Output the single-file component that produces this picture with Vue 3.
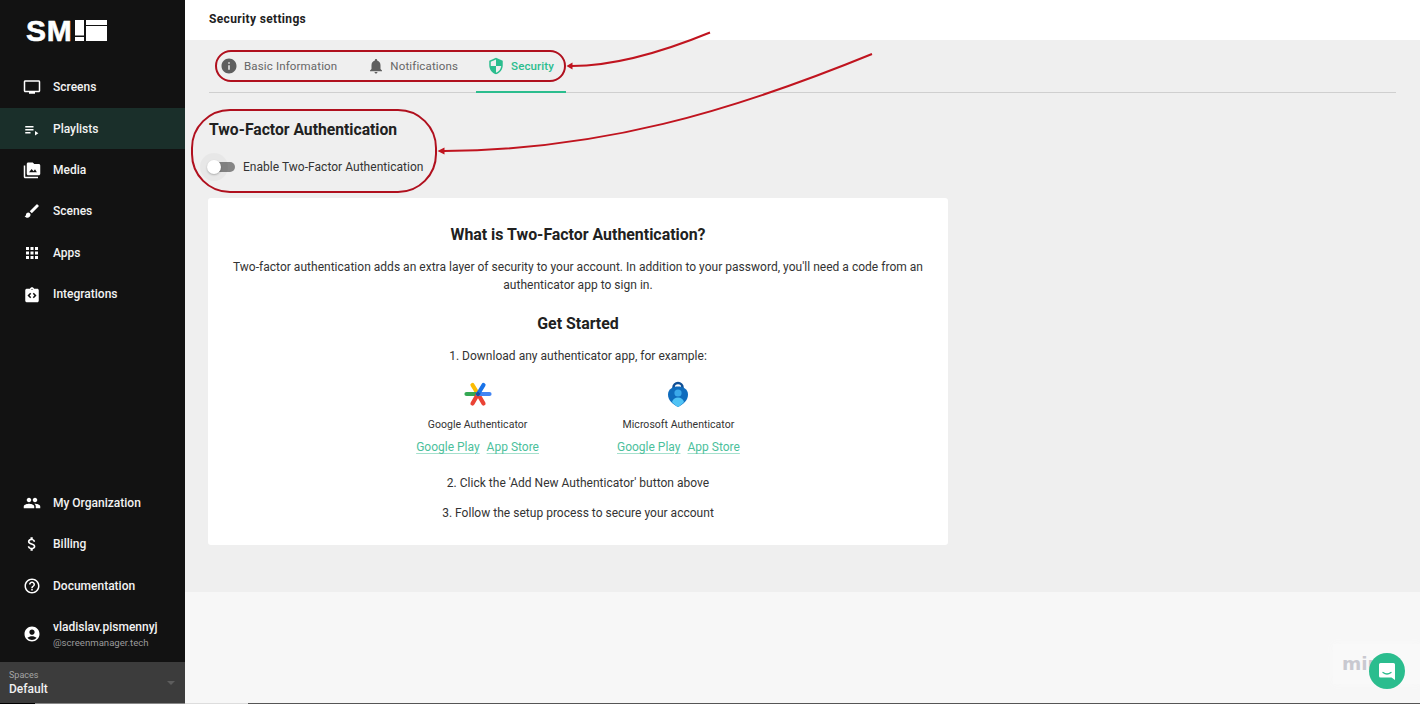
<template>
  <div class="page">
    <aside class="sidebar">
      <div class="logo">
        <span class="logo-text">SM</span>
        <svg class="logo-mark" width="32" height="21" viewBox="0 0 32 21">
          <rect x="0" y="0" width="9" height="15.5" fill="#fff" />
          <rect x="0" y="17" width="9" height="4" fill="#fff" />
          <rect x="11" y="0" width="21" height="5" fill="#fff" />
          <rect x="11" y="6" width="21" height="15" fill="#fff" />
        </svg>
      </div>
      <nav class="nav">
        <div v-for="item in topItems" :key="item.label" class="nav-item" :class="{ active: item.active }">
          <svg class="nav-icon" viewBox="0 0 24 24" fill="#fff"><path :d="item.icon" /></svg>
          <span>{{ item.label }}</span>
        </div>
      </nav>
      <div class="nav bottom">
        <div v-for="item in bottomItems" :key="item.label" class="nav-item">
          <svg class="nav-icon" viewBox="0 0 24 24" fill="#fff"><path :d="item.icon" /></svg>
          <span>{{ item.label }}</span>
        </div>
        <div class="user">
          <svg class="nav-icon" viewBox="0 0 24 24" fill="#fff">
            <path d="M12 2C6.48 2 2 6.48 2 12s4.48 10 10 10 10-4.48 10-10S17.52 2 12 2zm0 4c1.93 0 3.5 1.57 3.5 3.5S13.93 13 12 13s-3.5-1.57-3.5-3.5S10.07 6 12 6zm0 14c-2.03 0-4.43-.82-6.14-2.88C7.55 15.8 9.68 15 12 15s4.45.8 6.14 2.12C16.43 19.18 14.03 20 12 20z" />
          </svg>
          <div class="user-text">
            <div class="user-name">vladislav.pismennyj</div>
            <div class="user-domain">@screenmanager.tech</div>
          </div>
        </div>
      </div>
      <div class="spaces">
        <div>
          <div class="spaces-label">Spaces</div>
          <div class="spaces-value">Default</div>
        </div>
        <span class="spaces-caret"></span>
      </div>
    </aside>

    <main class="main">
      <header class="topbar">Security settings</header>
      <section class="content">
        <div class="tabs">
          <div class="tab tab-info">
            <svg class="tab-icon" viewBox="0 0 24 24" fill="#5f5f5f"><path d="M12 2C6.48 2 2 6.48 2 12s4.48 10 10 10 10-4.48 10-10S17.52 2 12 2zm1 15h-2v-6h2v6zm0-8h-2V7h2v2z" /></svg>
            <span>Basic Information</span>
          </div>
          <div class="tab tab-notif">
            <svg class="tab-icon" viewBox="0 0 24 24" fill="#5f5f5f"><path d="M12 22c1.1 0 2-.9 2-2h-4c0 1.1.89 2 2 2zm6-6v-5c0-3.07-1.64-5.64-4.5-6.32V4c0-.83-.67-1.5-1.5-1.5s-1.5.67-1.5 1.5v.68C7.63 5.36 6 7.92 6 11v5l-2 2v1h16v-1l-2-2z" /></svg>
            <span>Notifications</span>
          </div>
          <div class="tab tab-active">
            <svg class="tab-icon" viewBox="0 0 24 24" fill="#2bbd8e"><path d="M12 1L3 5v6c0 5.55 3.84 10.74 9 12 5.16-1.26 9-6.45 9-12V5l-9-4zm0 10.99h7c-.53 4.12-3.28 7.79-7 8.94V12H5V6.3l7-3.11v8.8z" /></svg>
            <span>Security</span>
          </div>
        </div>

        <h2 class="section-title">Two-Factor Authentication</h2>
        <div class="switch-row">
          <span class="switch"><span class="switch-halo"></span><span class="switch-knob"></span></span>
          <span class="switch-label">Enable Two-Factor Authentication</span>
        </div>

        <div class="card">
          <h3 class="card-title">What is Two-Factor Authentication?</h3>
          <p class="card-intro">Two-factor authentication adds an extra layer of security to your account. In addition to your password, you'll need a code from an authenticator app to sign in.</p>
          <h3 class="card-subtitle">Get Started</h3>
          <p class="step first">1. Download any authenticator app, for example:</p>
          <div class="apps">
            <div class="app">
              <svg class="app-icon" width="28" height="28" viewBox="0 0 28 28" fill="none" stroke-width="4.2" stroke-linecap="round">
                <path d="M14 14L8.5 5" stroke="#fbbc04" />
                <path d="M14 14H2.5" stroke="#34a853" />
                <path d="M14 14L8.5 23.5" stroke="#ea4335" />
                <path d="M14 14L19.5 23.5" stroke="#ea4335" />
                <path d="M14 14H25.5" stroke="#4285f4" />
                <path d="M14 14L19.5 5" stroke="#1a73e8" />
                <path d="M14 11.5L16.5 14L14 16.5L11.5 14z" fill="#1a4fa0" stroke="none" />
              </svg>
              <div class="app-name">Google Authenticator</div>
              <div class="app-links"><a>Google Play</a><a>App Store</a></div>
            </div>
            <div class="app">
              <svg class="app-icon" width="28" height="28" viewBox="0 0 28 28">
                <path d="M9.5 9V7.5a4.5 4.5 0 0 1 9 0V9" fill="none" stroke="#0f4f96" stroke-width="2.6" />
                <path d="M14 6.5c5 0 10 2.5 10 8 0 6-5 10-10 12.5C9 24.5 4 20.5 4 14.5c0-5.5 5-8 10-8z" fill="#0f6cbd" />
                <circle cx="14" cy="13" r="3.6" fill="#3aa8ea" />
                <path d="M8 22c.8-3 3-4.5 6-4.5s5.200 1.500 6 4.500c-1.800 2.200-3.800 3.800-6 5-2.200-1.200-4.200-2.800-6-5z" fill="#50c3f5" />
              </svg>
              <div class="app-name">Microsoft Authenticator</div>
              <div class="app-links"><a>Google Play</a><a>App Store</a></div>
            </div>
          </div>
          <p class="step second">2. Click the 'Add New Authenticator' button above</p>
          <p class="step third">3. Follow the setup process to secure your account</p>
        </div>
      </section>
      <div class="footer-area">
        <span class="miro">miro</span>
        <div class="chat">
          <svg width="18" height="19" viewBox="0 0 18 19">
            <path d="M2.5 1h13A1.5 1.5 0 0 1 17 2.5V18l-3.500-2.500h-11A1.500 1.500 0 0 1 1 14V2.500A1.500 1.500 0 0 1 2.500 1z" fill="#fff" />
            <path d="M5 10.500c2.300 1.700 5.700 1.700 8 0" fill="none" stroke="#2bbd8e" stroke-width="1.3" stroke-linecap="round" />
          </svg>
        </div>
      </div>
    </main>

    <svg class="notes" width="1420" height="704" viewBox="0 0 1420 704" fill="none">
      <rect x="216" y="51" width="349" height="30" rx="15" stroke="#b0101e" stroke-width="2" />
      <rect x="192" y="110" width="244" height="82" rx="38" stroke="#b0101e" stroke-width="2" />
      <path d="M710 32.500C660 53 615 66 572 66" stroke="#c0141f" stroke-width="2" />
      <path d="M872 54C730 112 600 150 444 151" stroke="#c0141f" stroke-width="2" />
      <path d="M566.500 66l6-3.500v7z" fill="#c0141f" />
      <path d="M437.500 151l7-3.500v7z" fill="#c0141f" />
    </svg>
    <div class="edge"></div>
  </div>
</template>

<script setup>
const topItems = [
  { label: 'Screens', icon: 'M21 3H3c-1.100 0-2 .9-2 2v12c0 1.100.9 2 2 2h5v2h8v-2h5c1.100 0 2-.9 2-2V5c0-1.100-.9-2-2-2zm0 14H3V5h18v12z' },
  { label: 'Playlists', active: true, icon: 'M3 8h11v2H3zM3 12h11v2H3zM3 16h7v2H3zM16 14.500v6l4.500-3z' },
  { label: 'Media', icon: 'M3 6H1v15c0 1.100.9 2 2 2h17v-2H3V6zm18-2h-6l-2-2H7c-1.100 0-2 .9-2 2v13c0 1.100.9 2 2 2h14c1.100 0 2-.9 2-2V6c0-1.100-.9-2-2-2zM8 15l3.500-4.500 2.500 3 2-2.500 2.500 4H8z' },
  { label: 'Scenes', icon: 'M7 14c-1.660 0-3 1.340-3 3 0 1.310-1.160 2-2 2 .92 1.220 2.490 2 4 2 2.210 0 4-1.790 4-4 0-1.660-1.340-3-3-3zm13.710-9.370l-1.340-1.340a.996.996 0 0 0-1.410 0L9 12.250 11.750 15l8.960-8.960a.996.996 0 0 0 0-1.410z' },
  { label: 'Apps', icon: 'M4 8h4V4H4v4zm6 12h4v-4h-4v4zm-6 0h4v-4H4v4zm0-6h4v-4H4v4zm6 0h4v-4h-4v4zm6-10v4h4V4h-4zm-6 4h4V4h-4v4zm6 6h4v-4h-4v4zm0 6h4v-4h-4v4z' },
  { label: 'Integrations', icon: 'M19 5h-4.180C14.400 3.840 13.300 3 12 3s-2.400.84-2.820 2H5c-.14 0-.27.01-.4.04-.39.08-.74.28-1.010.55-.18.18-.33.4-.43.64-.1.23-.16.49-.16.77v14c0 .27.06.54.16.78.1.24.25.45.43.64.27.27.62.47 1.010.55.13.02.26.03.4.03h14c1.100 0 2-.9 2-2V7c0-1.100-.9-2-2-2zm-8 11.170l-1.410 1.420L6 14l3.590-3.590L11 11.830 8.830 14 11 16.170zm1-9.420c-.41 0-.75-.34-.75-.75s.34-.75.75-.75.75.34.75.75-.34.75-.75.75zm2.410 10.840L13 16.170 15.170 14 13 11.830l1.410-1.420L18 14l-3.590 3.590z' }
]

const bottomItems = [
  { label: 'My Organization', icon: 'M16 11c1.660 0 2.990-1.340 2.990-3S17.660 5 16 5s-3 1.340-3 3 1.340 3 3 3zm-8 0c1.660 0 2.990-1.340 2.990-3S9.660 5 8 5 5 6.340 5 8s1.340 3 3 3zm0 2c-2.330 0-7 1.170-7 3.500V19h14v-2.500c0-2.330-4.670-3.500-7-3.500zm8 0c-.29 0-.62.02-.97.05 1.160.84 1.970 1.970 1.970 3.450V19h6v-2.500c0-2.330-4.670-3.500-7-3.500z' },
  { label: 'Billing', icon: 'M11.800 10.900c-2.270-.59-3-1.200-3-2.150 0-1.090 1.010-1.850 2.700-1.850 1.780 0 2.440.85 2.500 2.100h2.210c-.07-1.720-1.120-3.300-3.210-3.810V3h-3v2.160c-1.940.42-3.500 1.680-3.500 3.610 0 2.310 1.910 3.460 4.700 4.130 2.500.6 3 1.480 3 2.410 0 .69-.49 1.790-2.700 1.790-2.060 0-2.870-.92-2.980-2.100h-2.200c.12 2.190 1.760 3.420 3.680 3.830V21h3v-2.150c1.950-.37 3.500-1.500 3.500-3.550 0-2.840-2.430-3.810-4.700-4.400z' },
  { label: 'Documentation', icon: 'M11 18h2v-2h-2v2zm1-16C6.480 2 2 6.480 2 12s4.480 10 10 10 10-4.480 10-10S17.520 2 12 2zm0 18c-4.410 0-8-3.590-8-8s3.590-8 8-8 8 3.590 8 8-3.590 8-8 8zm0-14c-2.210 0-4 1.790-4 4h2c0-1.100.9-2 2-2s2 .9 2 2c0 2-3 1.750-3 5h2c0-2.250 3-2.500 3-5 0-2.210-1.790-4-4-4z' }
]
</script>

<style>
html, body {
  margin: 0;
  background: #fff;
}
</style>

<style scoped>
.page {
  position: relative;
  display: flex;
  width: 1420px;
  height: 704px;
  overflow: hidden;
  font-family: Roboto, "Liberation Sans", sans-serif;
  color: #212121;
}

.sidebar {
  width: 185px;
  flex: none;
  display: flex;
  flex-direction: column;
  background: #121212;
  color: #f2f2f2;
}

.logo {
  display: flex;
  align-items: flex-start;
  height: 66.6px;
  padding: 20px 0 0 26px;
  box-sizing: border-box;
}

.logo-text {
  width: 49px;
  font-family: "Liberation Sans", sans-serif;
  font-size: 30px;
  font-weight: 700;
  letter-spacing: 0.8px;
  color: #fff;
  line-height: 21px;
  -webkit-text-stroke: 0.6px #fff;
}

.logo-mark {
  display: block;
}

.nav-item {
  display: flex;
  align-items: center;
  height: 41.4px;
  padding-left: 23px;
  font-size: 12px;
  font-weight: 500;
}

.nav-item.active {
  background: #1a2f2a;
}

.nav-icon {
  width: 18px;
  height: 18px;
  flex: none;
  margin-right: 12px;
}

.bottom {
  margin-top: auto;
}

.user {
  display: flex;
  align-items: center;
  height: 55.5px;
  padding-left: 23px;
  box-sizing: border-box;
}

.user-name {
  font-size: 12px;
  font-weight: 500;
  line-height: 16px;
}

.user-domain {
  font-size: 9.6px;
  line-height: 14px;
  margin-top: 1px;
  color: #9a9a9a;
}

.spaces {
  display: flex;
  align-items: center;
  justify-content: space-between;
  height: 42px;
  padding: 0 10px 1px 9px;
  box-sizing: border-box;
  background: #3c3c3c;
}

.spaces-label {
  font-size: 9px;
  line-height: 12px;
  color: #a5a5a5;
}

.spaces-value {
  font-size: 12px;
  font-weight: 500;
  line-height: 16px;
  color: #f0f0f0;
}

.spaces-caret {
  width: 0;
  height: 0;
  border-left: 4.5px solid transparent;
  border-right: 4.5px solid transparent;
  border-top: 4.5px solid #5d5d5d;
}

.main {
  flex: 1;
  display: flex;
  flex-direction: column;
  min-width: 0;
}

.topbar {
  height: 40px;
  padding: 11px 0 0 24px;
  box-sizing: border-box;
  font-size: 12px;
  font-weight: 700;
  letter-spacing: 0.35px;
  line-height: 16px;
  background: #fff;
}

.content {
  height: 552px;
  padding: 0 24px;
  box-sizing: border-box;
  background: #efefef;
}

.tabs {
  display: flex;
  gap: 6px;
  height: 53px;
  box-sizing: border-box;
  border-bottom: 1px solid #cfcfcf;
}

.tab {
  display: flex;
  align-items: center;
  gap: 6px;
  height: 53px;
  padding: 0 12px 2px 11px;
  box-sizing: border-box;
  font-size: 11.5px;
  letter-spacing: 0.15px;
  color: #666;
}

.tab-info {
  padding-right: 13px;
}

.tab-notif {
  gap: 5px;
}

.tab-active {
  padding-bottom: 0;
  font-weight: 500;
  letter-spacing: 0.1px;
  color: #2bbd8e;
  border-bottom: 2px solid #2bbd8e;
}

.tab-icon {
  width: 18px;
  height: 18px;
  flex: none;
}

.section-title {
  margin: 27px 0 0;
  font-size: 15.7px;
  font-weight: 700;
  line-height: 19px;
  color: #212121;
}

.switch-row {
  display: flex;
  align-items: center;
  height: 24px;
  margin-top: 16px;
}

.switch {
  position: relative;
  width: 26px;
  height: 10px;
  margin-right: 8px;
  border-radius: 5px;
  background: #858585;
}

.switch-halo {
  position: absolute;
  left: -9px;
  top: -9px;
  width: 28px;
  height: 28px;
  border-radius: 50%;
  background: rgba(0, 0, 0, 0.03);
}

.switch-knob {
  position: absolute;
  left: -2px;
  top: -2px;
  width: 14px;
  height: 14px;
  border-radius: 50%;
  background: #fff;
  box-shadow: 0 1px 2px rgba(0, 0, 0, 0.25);
}

.switch-label {
  font-size: 12px;
  letter-spacing: 0.03px;
  color: #333;
}

.card {
  width: 740px;
  height: 347px;
  margin-top: 19px;
  margin-left: -1px;
  padding: 28px 20px 0;
  box-sizing: border-box;
  background: #fff;
  border-radius: 3px;
  text-align: center;
}

.card-title,
.card-subtitle {
  margin: 0;
  font-size: 15.9px;
  font-weight: 700;
  line-height: 18px;
  color: #212121;
}

.card-intro {
  margin: 14px 0 0;
  font-size: 12px;
  line-height: 18px;
  letter-spacing: 0.02px;
  color: #333;
}

.card-subtitle {
  margin-top: 21px;
}

.step {
  margin: 0;
  font-size: 12px;
  line-height: 16px;
  letter-spacing: 0.02px;
  color: #333;
}

.step.first {
  margin-top: 15px;
}

.step.second {
  margin-top: 20px;
}

.step.third {
  margin-top: 14px;
}

.apps {
  display: flex;
  justify-content: center;
  gap: 78px;
  margin-top: 16px;
}

.app {
  display: flex;
  flex-direction: column;
  align-items: center;
}

.app-icon {
  display: block;
}

.app-name {
  margin-top: 10px;
  font-size: 10.5px;
  line-height: 14px;
  letter-spacing: 0.03px;
  color: #333;
}

.app-links {
  display: flex;
  gap: 7px;
  margin-top: 7px;
  font-size: 12px;
  line-height: 16px;
}

.app-links a {
  color: #4cbf9c;
  text-decoration: underline;
  text-underline-offset: 2px;
  text-decoration-thickness: 1px;
  text-decoration-color: #a5e0cd;
}

.footer-area {
  position: relative;
  flex: 1;
  background: #f7f7f7;
}

.miro {
  position: absolute;
  right: 0;
  bottom: 20px;
  width: 87px;
  padding: 9px 0 9px 9px;
  box-sizing: border-box;
  background: #f9f9f9;
  box-shadow: 0 0 8px #f9f9f9;
  font-family: "DejaVu Sans", sans-serif;
  font-size: 18.5px;
  font-weight: 700;
  line-height: 22px;
  color: #c9c9d0;
}

.chat {
  position: absolute;
  right: 15px;
  bottom: 15px;
  display: flex;
  align-items: center;
  justify-content: center;
  width: 36px;
  height: 36px;
  border-radius: 50%;
  background: #2bbd8e;
}

.notes {
  position: absolute;
  left: 0;
  top: 0;
  pointer-events: none;
}

.edge {
  position: absolute;
  left: 0;
  right: 0;
  bottom: 0;
  height: 1px;
  background: linear-gradient(to right, #000 35px, #888 35px, #888 185px, #ddd 185px, #ddd 248px, #555 248px);
}
</style>
